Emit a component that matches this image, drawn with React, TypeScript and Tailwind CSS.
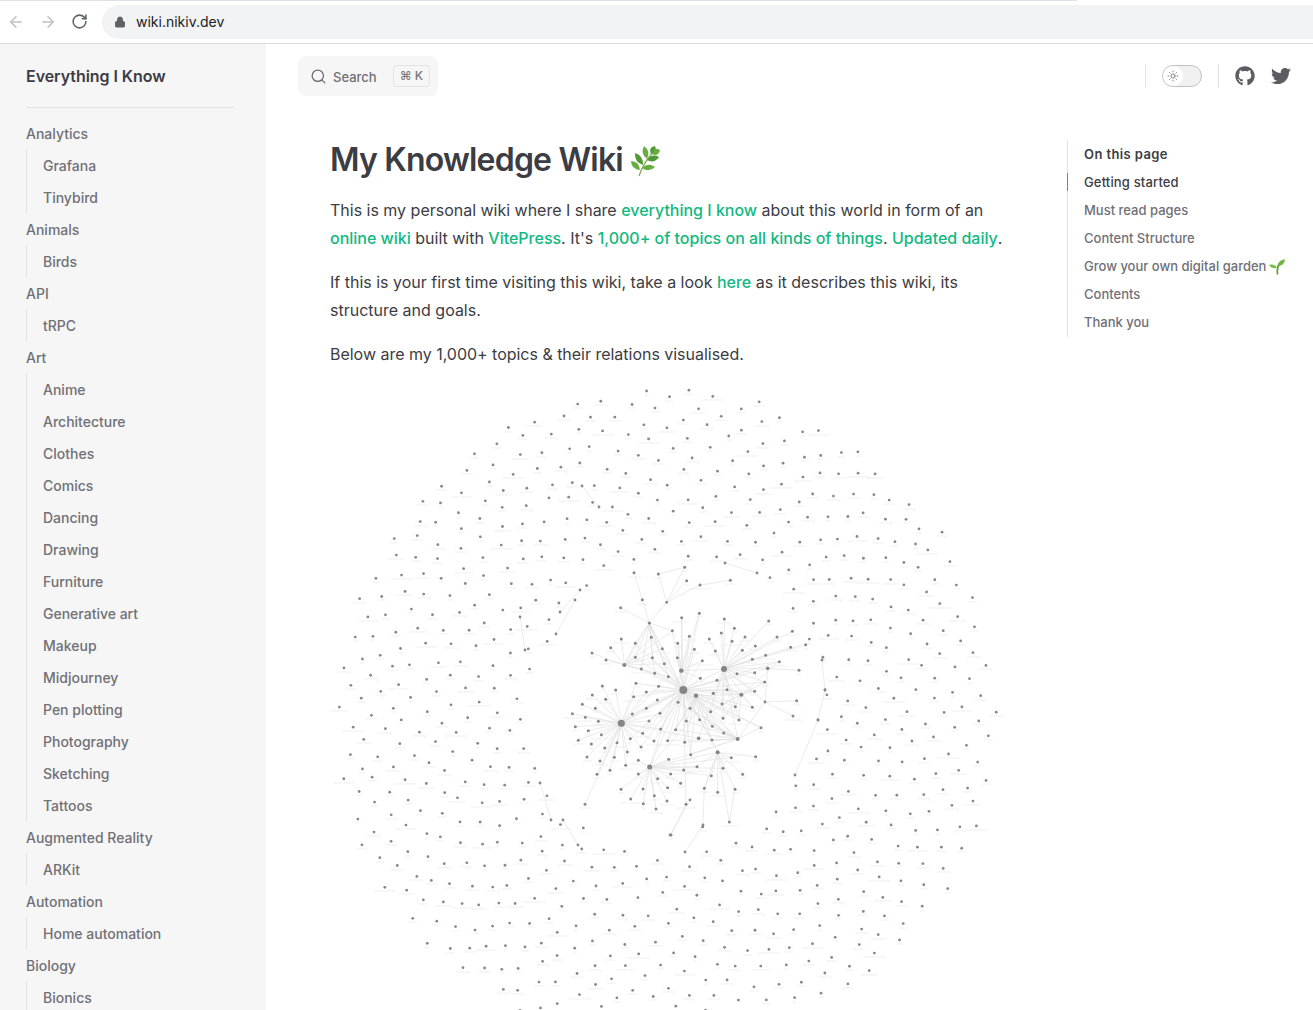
import React from 'react';
import { ArrowLeft, ArrowRight, RotateCw, Lock, Search, Sun } from 'lucide-react';
import { FaGithub, FaTwitter } from 'react-icons/fa';

const SIDEBAR = [
  { title: 'Analytics', items: ['Grafana', 'Tinybird'] },
  { title: 'Animals', items: ['Birds'] },
  { title: 'API', items: ['tRPC'] },
  {
    title: 'Art',
    items: ['Anime', 'Architecture', 'Clothes', 'Comics', 'Dancing', 'Drawing', 'Furniture', 'Generative art', 'Makeup', 'Midjourney', 'Pen plotting', 'Photography', 'Sketching', 'Tattoos'],
  },
  { title: 'Augmented Reality', items: ['ARKit'] },
  { title: 'Automation', items: ['Home automation'] },
  { title: 'Biology', items: ['Bionics'] },
];

const WORDS = ['rust', 'music', 'physics', 'climbing', 'go', 'swift', 'databases', 'cooking', 'design', 'math', 'linux', 'neuroscience', 'poetry', 'sql', 'finance', 'travel', 'compilers', 'sleep', 'vim', 'open source'];

// graph drawn in page coordinates; cluster points were read off a 3x crop
const toPage = (v: number) => 560 + v / 3;

const HUBS: [number, number, number][] = [
  [370, 390, 4], [184, 490, 3.5], [492, 327, 3], [364, 332, 2.2], [408, 407, 2.2], [269, 621, 2.5],
  [473, 577, 2], [533, 537, 2], [544, 404, 2], [623, 325, 1.8], [193, 315, 2], [268, 189, 1.6],
  [320, 127, 1.4], [615, 426, 1.4], [416, 535, 1.8], [460, 400, 1.6],
];

const GROUPS: { hubs: number[]; pts: [number, number][] }[] = [
  {
    hubs: [1],
    pts: [[127, 378], [167, 390], [97, 405], [137, 418], [67, 433], [106, 445], [37, 461], [76, 472], [115, 484], [46, 500], [85, 512], [124, 524], [55, 541], [94, 552], [134, 564], [81, 591], [120, 603], [163, 592], [202, 576], [171, 548], [150, 631], [111, 643], [75, 733], [197, 616]],
  },
  {
    hubs: [1, 0],
    pts: [[211, 536], [243, 561], [248, 520], [267, 483], [300, 460], [259, 445], [292, 420], [221, 410], [228, 370], [259, 396], [296, 379], [217, 462], [282, 543], [302, 507]],
  },
  {
    hubs: [5],
    pts: [[183, 688], [212, 717], [249, 687], [283, 707], [321, 723], [288, 747], [250, 731], [235, 642], [235, 601], [293, 656], [332, 642], [362, 670], [323, 683], [371, 630], [326, 598]],
  },
  {
    hubs: [10],
    pts: [[96, 279], [138, 300], [152, 263], [184, 237]],
  },
  {
    hubs: [10, 0, 11],
    pts: [[226, 250], [226, 292], [244, 327], [284, 340], [277, 293], [313, 311], [307, 266], [274, 232], [337, 212], [325, 350]],
  },
  {
    hubs: [2],
    pts: [[493, 177], [448, 237], [484, 219], [523, 205], [516, 244], [555, 231], [547, 271], [586, 258], [577, 298], [466, 273], [531, 341], [584, 338], [617, 286], [626, 183], [651, 231], [697, 214], [692, 262], [737, 254]],
  },
  {
    hubs: [0, 3],
    pts: [[418, 160], [365, 173], [388, 229], [403, 268], [353, 250], [352, 293], [427, 302], [421, 355]],
  },
  {
    hubs: [0, 2, 8],
    pts: [[471, 361], [501, 389], [526, 440], [486, 432], [452, 455], [489, 475], [537, 480], [577, 442], [584, 394], [614, 366], [658, 305]],
  },
  {
    hubs: [0, 7, 4],
    pts: [[603, 503], [456, 540], [491, 519], [457, 499], [419, 479], [379, 483], [347, 509], [323, 542], [390, 445], [354, 427], [374, 547], [392, 584]],
  },
  {
    hubs: [6, 5],
    pts: [[514, 593], [489, 625], [454, 647], [411, 620]],
  },
  {
    hubs: [6],
    pts: [[587, 590], [548, 643], [433, 685], [473, 697]],
  },
  { hubs: [9], pts: [[717, 331]] },
  { hubs: [13], pts: [[710, 422], [699, 468]] },
];

const EXTRA_NODES: [number, number][] = [
  [222, 38], [247, 119], [295, 42], [374, 22], [420, 75], [511, 61], [380, 62], [182, 143], [525, 688], [508, 786], [428, 800], [333, 825], [378, 733],
];

const EXTRA_EDGES: [number, number, number, number][] = [
  [222, 38, 247, 119], [247, 119, 268, 189], [295, 42, 374, 22], [374, 22, 320, 127], [295, 42, 320, 127], [420, 75, 320, 127], [511, 61, 420, 75], [380, 62, 320, 127],
  [320, 127, 268, 189], [182, 143, 268, 189], [268, 189, 370, 390], [268, 189, 193, 315], [525, 688, 473, 577], [525, 688, 508, 786], [508, 786, 473, 577], [428, 800, 433, 685],
  [333, 825, 378, 733], [378, 733, 370, 390], [433, 685, 473, 577], [623, 325, 370, 390], [623, 325, 492, 327], [615, 426, 533, 537], [615, 426, 492, 327], [623, 325, 615, 426],
  [184, 490, 370, 390], [184, 490, 416, 535], [269, 621, 370, 390], [269, 621, 473, 577], [269, 621, 533, 537], [370, 390, 492, 327], [370, 390, 544, 404], [370, 390, 473, 577],
  [370, 390, 533, 537], [408, 407, 544, 404], [408, 407, 533, 537], [492, 327, 533, 537], [492, 327, 416, 535], [364, 332, 492, 327], [364, 332, 269, 621], [460, 400, 269, 621],
];

// the few links out in the ring, already in page coordinates
const RING_EDGES: [number, number, number, number][] = [
  [582, 486, 599, 507], [520, 617, 525, 650], [540, 783, 551, 820], [563, 820, 578, 845], [725, 563, 757, 573], [822, 660, 825, 690], [825, 690, 818, 720], [818, 720, 795, 775],
  [670, 835, 690, 800], [685, 852, 703, 825], [575, 600, 556, 634], [560, 612, 580, 590],
];

function ringNodes() {
  const out: [number, number, string][] = [];
  let seed = 7;
  const rand = () => {
    seed = (seed * 16807) % 2147483647;
    return seed / 2147483647;
  };
  for (let i = 150; i < 853; i++) {
    const r = 11.3 * Math.sqrt(i);
    const a = i * 2.39996;
    const x = 666 + r * Math.cos(a) + (rand() - 0.5) * 6;
    const y = 716 + r * Math.sin(a) + (rand() - 0.5) * 6;
    if (Math.hypot(x - 678, y - 698) < 142) continue;
    out.push([x, y, WORDS[i % WORDS.length]]);
  }
  return out;
}

function KnowledgeGraph() {
  const ring = ringNodes();
  const clusterEdges = GROUPS.flatMap((g) =>
    g.pts.flatMap(([x, y]) => g.hubs.map((h) => [x, y, HUBS[h][0], HUBS[h][1]] as [number, number, number, number]))
  ).concat(EXTRA_EDGES);
  const clusterNodes = GROUPS.flatMap((g) => g.pts).concat(EXTRA_NODES);

  return (
    <svg viewBox="330 380 680 630" className="block w-[680px] h-[630px]">
      <g stroke="#e2e2e2" strokeWidth="0.7">
        {clusterEdges.map(([x1, y1, x2, y2], i) => (
          <line key={i} x1={toPage(x1)} y1={toPage(y1)} x2={toPage(x2)} y2={toPage(y2)} />
        ))}
        {RING_EDGES.map(([x1, y1, x2, y2], i) => (
          <line key={i} x1={x1} y1={y1} x2={x2} y2={y2} />
        ))}
      </g>
      <g fill="#eeeeee" fontSize="3.5" textAnchor="middle" fontFamily="Inter, sans-serif">
        {ring.filter(([, y]) => y < 1000).map(([x, y, word], i) => (
          <text key={i} x={x} y={y + 5}>{word}</text>
        ))}
        {clusterNodes.map(([x, y], i) => (
          <text key={i} x={toPage(x)} y={toPage(y) + 5}>{WORDS[i % WORDS.length]}</text>
        ))}
      </g>
      <g fill="#888888">
        {ring.map(([x, y], i) => (
          <circle key={i} cx={x} cy={y} r="1.4" />
        ))}
        {RING_EDGES.map(([x1, y1, x2, y2], i) => (
          <g key={i}>
            <circle cx={x1} cy={y1} r="1.4" />
            <circle cx={x2} cy={y2} r="1.4" />
          </g>
        ))}
        {clusterNodes.map(([x, y], i) => (
          <circle key={i} cx={toPage(x)} cy={toPage(y)} r="1.5" />
        ))}
        {HUBS.map(([x, y, r], i) => (
          <circle key={i} cx={toPage(x)} cy={toPage(y)} r={r} fill="#858585" />
        ))}
      </g>
    </svg>
  );
}

// one pointed leaf from where it joins the stem to its tip
function leafPath(ax: number, ay: number, tx: number, ty: number, w: number) {
  const mx = (ax + tx) / 2;
  const my = (ay + ty) / 2;
  const len = Math.hypot(tx - ax, ty - ay);
  const nx = (-(ty - ay) / len) * w;
  const ny = ((tx - ax) / len) * w;
  return `M${ax} ${ay} Q${mx + nx} ${my + ny} ${tx} ${ty} Q${mx - nx} ${my - ny} ${ax} ${ay}Z`;
}

function Herb() {
  const leaves: [number, number, number, number][] = [
    [10, 25, 1, 16], [13, 20, 5, 8], [17, 14, 14, 1], [21, 9, 25, 1], [22, 9, 30, 5], [17, 15, 29, 12], [12, 23, 25, 22],
  ];
  return (
    <svg viewBox="0 0 31 32" className="inline-block w-[31px] h-[32px] align-[-6px]">
      <path d="M9 31 C11 25 16 15 24 6" stroke="#8aa85a" strokeWidth="1.3" fill="none" />
      {leaves.map(([ax, ay, tx, ty], i) => (
        <path key={i} d={leafPath(ax, ay, tx, ty, 5.6)} fill={i % 2 ? '#4f9a34' : '#68ad40'} />
      ))}
    </svg>
  );
}

function Seedling() {
  return (
    <svg viewBox="0 0 16 16" className="inline-block w-[16px] h-[16px] align-[-3px]">
      <path d="M8.5 15.5 C8 11 8.5 8 10 6" stroke="#5f9e3a" strokeWidth="1.7" fill="none" />
      <path d="M8 7 C9.5 2.5 12.5 0.5 16 0.5 C15.5 4.5 12.5 7.5 8 7Z" fill="#6fb543" />
      <path d="M8 8.5 C6 5.5 3 5 0 6 C2 9.2 5 9.8 8 8.5Z" fill="#7cc04d" />
    </svg>
  );
}

function Link({ children }: { children: React.ReactNode }) {
  return <span className="text-[#10b981] font-medium">{children}</span>;
}

export default function App() {
  return (
    <div className="h-[1010px] overflow-hidden bg-white font-['Inter',sans-serif] text-[#3c3c43]">
      {/* Browser bar */}
      <div className="relative h-[44px] flex items-center border-b border-[#dcdcde] bg-white">
        <div className="absolute left-0 top-0 h-px w-[1077px] bg-[#dfe1e5]" />
        <ArrowLeft className="ml-[7px] w-[18px] h-[18px] text-[#bdc1c6]" strokeWidth={2} />
        <ArrowRight className="ml-[14px] w-[18px] h-[18px] text-[#bdc1c6]" strokeWidth={2} />
        <RotateCw className="ml-[14px] w-[17px] h-[17px] text-[#5f6368]" strokeWidth={2.2} />
        <div className="ml-[14px] flex-1 h-[34px] flex items-center rounded-l-full bg-[#f1f3f4]">
          <Lock className="ml-[12px] w-[12px] h-[12px] text-[#5f6368] fill-[#5f6368]" strokeWidth={2} />
          <span className="ml-[10px] text-[14px] text-[#202124]">wiki.nikiv.dev</span>
        </div>
      </div>

      <div className="flex">
        {/* Sidebar */}
        <aside className="w-[266px] h-[966px] shrink-0 bg-[#f6f6f7] pl-[26px] pr-[32px]">
          <div className="h-[64px] flex items-center text-[16px] font-semibold tracking-[-0.05px] border-b border-[#e2e2e3]">Everything I Know</div>
          <div className="pt-[9px]">
            {SIDEBAR.map((group) => (
              <div key={group.title}>
                <div className="h-[32px] flex items-center text-[14px] font-medium text-[#707075]">{group.title}</div>
                <div className="border-l border-[#e2e2e3] pl-[16px]">
                  {group.items.map((item) => (
                    <div key={item} className="h-[32px] flex items-center text-[14px] font-medium text-[#707075]">{item}</div>
                  ))}
                </div>
              </div>
            ))}
          </div>
        </aside>

        <main className="flex-1 min-w-0">
          {/* Top nav */}
          <div className="h-[64px] flex items-center pl-[32px] pr-[22px]">
            <div className="w-[140px] h-[40px] flex items-center rounded-lg bg-[#f6f6f7] pl-[12px]">
              <Search className="w-[17px] h-[17px] text-[#67676c]" strokeWidth={1.7} />
              <span className="ml-[6px] mt-[4px] text-[13px] font-medium text-[#707075]">Search</span>
              <span className="ml-[16px] h-[22px] px-[6px] flex items-center rounded border border-[#e2e2e3] text-[12px] font-medium text-[#76767b]">⌘ K</span>
            </div>
            <div className="ml-auto w-px h-[24px] bg-[#e2e2e3]" />
            <div className="ml-[16px] w-[40px] h-[22px] rounded-full border border-[#c2c2c4] bg-[#f1f1f2] flex items-center">
              <div className="w-[20px] h-[20px] rounded-full bg-white flex items-center justify-center">
                <Sun className="w-[12px] h-[12px] text-[#67676c]" strokeWidth={1.6} />
              </div>
            </div>
            <div className="ml-[16px] w-px h-[24px] bg-[#e2e2e3]" />
            <FaGithub className="ml-[16px] w-[20px] h-[20px] text-[#5c5c62]" />
            <FaTwitter className="ml-[16px] w-[20px] h-[20px] text-[#5c5c62]" />
          </div>

          <div className="flex">
            {/* Article */}
            <article className="ml-[64px] w-[688px] shrink-0 pt-[32px]">
              <h1 className="h-[40px] leading-[40px] text-[32px] font-semibold tracking-[-0.8px] whitespace-nowrap">
                My Knowledge Wiki <Herb />
              </h1>
              <p className="mt-[16px] text-[16px] leading-[28px] tracking-[-0.01px]">
                This is my personal wiki where I share <Link>everything I know</Link> about this world in form of an <Link>online wiki</Link> built with <Link>VitePress</Link>. It's <Link>1,000+ of topics on all kinds of things</Link>. <Link>Updated daily</Link>.
              </p>
              <p className="mt-[16px] text-[16px] leading-[28px]">
                If this is your first time visiting this wiki, take a look <Link>here</Link> as it describes this wiki, its structure and goals.
              </p>
              <p className="mt-[16px] text-[16px] leading-[28px] tracking-[-0.02px]">Below are my 1,000+ topics &amp; their relations visualised.</p>
              <div className="mt-[12px]">
                <KnowledgeGraph />
              </div>
            </article>

            {/* On this page */}
            <nav className="relative ml-[49px] mt-[32px] self-start w-[230px] border-l border-[#e2e2e3] pl-[16px] pt-[1px] text-[13px] font-medium">
              <div className="absolute left-[-1px] top-[33px] w-px h-[18px] bg-[#10b981]" />
              <div className="h-[28px] flex items-center font-semibold tracking-[0.4px]">On this page</div>
              <div className="h-[28px] flex items-center tracking-[0.15px]">Getting started</div>
              <div className="h-[28px] flex items-center text-[#707075]">Must read pages</div>
              <div className="h-[28px] flex items-center text-[#707075]">Content Structure</div>
              <div className="h-[28px] flex items-center gap-[3px] text-[#707075] whitespace-nowrap">Grow your own digital garden <Seedling /></div>
              <div className="h-[28px] flex items-center text-[#707075]">Contents</div>
              <div className="h-[28px] flex items-center text-[#707075]">Thank you</div>
            </nav>
          </div>
        </main>
      </div>
    </div>
  );
}
